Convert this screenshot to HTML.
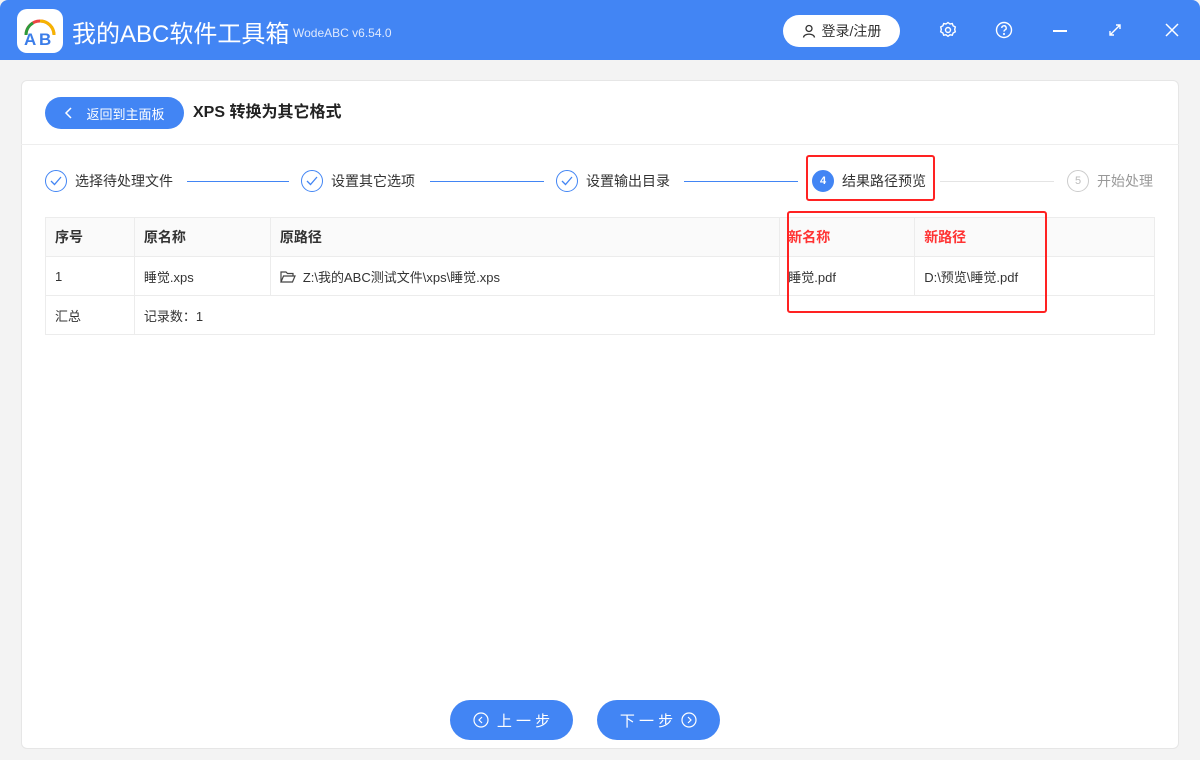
<!DOCTYPE html>
<html><head><meta charset="utf-8"><style>
*{margin:0;padding:0;box-sizing:border-box}
body{width:1200px;height:760px;background:#f3f3f3;font-family:"Liberation Sans","Noto Sans CJK SC",sans-serif;position:relative;overflow:hidden;color:#333}
.top{position:absolute;left:0;top:0;width:1200px;height:60px;background:#4285f4;border-radius:8px 8px 0 0}
.abs{position:absolute}
.card{position:absolute;left:21px;top:80px;width:1158px;height:669px;background:#fff;border:1px solid #e6e6e6;border-radius:6px}
.btn{position:absolute;background:#4285f4;color:#fff;border-radius:20px;font-size:15px;display:flex;align-items:center;justify-content:center}
.step{position:absolute;top:170px;font-size:14px;color:#333;display:flex;align-items:center;height:22px}
.circ{width:22px;height:22px;border:1px solid #4285f4;border-radius:50%;margin-right:8px;display:flex;align-items:center;justify-content:center}
.line{position:absolute;top:181px;height:1px;background:#4285f4}
table{position:absolute;left:45px;top:217px;width:1110px;border-collapse:collapse;font-size:13px}
td{border:1px solid #ececec;padding:0 9px;height:39px}
th{border:1px solid #ececec;padding:0 9px;height:39px;text-align:left;background:#fafafa;font-weight:bold;font-size:14px}
.red{color:#f33}
.rbox{position:absolute;border:2px solid #f22;border-radius:3px}
</style></head><body>
<div class="top"></div>
<div class="abs" style="left:17px;top:9px;width:46px;height:44px;background:#fff;border-radius:10px">
<svg width="46" height="44" viewBox="0 0 46 44"><path d="M9 26 A14 14 0 0 1 37 26" fill="none" stroke="#e44" stroke-width="3"/><path d="M23 12 A14 14 0 0 1 37 26" fill="none" stroke="#f5b400" stroke-width="3"/><path d="M9 26 A14 14 0 0 1 16 14" fill="none" stroke="#2a9d3c" stroke-width="3"/><text x="7" y="36" font-size="17" font-weight="bold" fill="#3b7de9" font-family="Liberation Sans">A</text><text x="22" y="36" font-size="17" font-weight="bold" fill="#3b7de9" font-family="Liberation Sans">B</text></svg></div>
<div class="abs" style="left:72px;top:14px;color:#fff;font-size:24px">我的ABC软件工具箱</div>
<div class="abs" style="left:293px;top:26px;color:#dfe9fd;font-size:12px">WodeABC v6.54.0</div>
<div class="abs" style="left:783px;top:15px;width:117px;height:32px;background:#fff;border-radius:16px;font-size:14px;color:#333;display:flex;align-items:center;justify-content:center;gap:6px">
<svg width="14" height="14" viewBox="0 0 14 14" fill="none" stroke="#333" stroke-width="1.3"><circle cx="7" cy="4.5" r="3"/><path d="M1.5 13.5 C2 9 12 9 12.5 13.5"/></svg>登录/注册</div>
<svg class="abs" style="left:939px;top:21px" width="18" height="18" viewBox="0 0 18 18" fill="none" stroke="#fff" stroke-width="1.4"><circle cx="9" cy="9" r="2.5"/><path d="M9 1.5l2 1.5 2.3-.4.8 2.2 2.2 1.2-.6 2.4.6 2.4-2.2 1.2-.8 2.2-2.3-.4-2 1.5-2-1.5-2.3.4-.8-2.2-2.2-1.2.6-2.4-.6-2.4 2.2-1.2.8-2.2 2.3.4z"/></svg>
<svg class="abs" style="left:995px;top:21px" width="18" height="18" viewBox="0 0 18 18" fill="none" stroke="#fff" stroke-width="1.4"><circle cx="9" cy="9" r="7.5"/><path d="M6.8 7a2.2 2.2 0 1 1 3 2c-.7.3-.8.8-.8 1.6"/><circle cx="9" cy="13" r=".4"/></svg>
<div class="abs" style="left:1053px;top:30px;width:14px;height:1.5px;background:#fff"></div>
<svg class="abs" style="left:1108px;top:23px" width="14" height="14" viewBox="0 0 14 14" fill="none" stroke="#fff" stroke-width="1.4"><path d="M2 12L12 2M8 2h4v4M2 8v4h4"/></svg>
<svg class="abs" style="left:1165px;top:23px" width="14" height="14" viewBox="0 0 14 14" stroke="#fff" stroke-width="1.5"><path d="M1 1l12 12M13 1L1 13"/></svg>
<div class="card"></div>
<div class="btn" style="left:45px;top:97px;width:139px;height:32px;border-radius:16px;font-size:13px">
<svg width="10" height="12" viewBox="0 0 10 12" style="margin-right:12px" fill="none" stroke="#fff" stroke-width="1.5"><path d="M7 1L2 6l5 5"/></svg>返回到主面板</div>
<div class="abs" style="left:193px;top:103px;font-size:16px;font-weight:bold;color:#222;line-height:20px">XPS 转换为其它格式</div>
<div class="abs" style="left:21px;top:144px;width:1158px;height:1px;background:#eee"></div>
<div class="step" style="left:45px"><div class="circ"><svg width="12" height="10" viewBox="0 0 12 10" fill="none" stroke="#4285f4" stroke-width="1.3"><path d="M1 5l3.5 3.5L11 1"/></svg></div>选择待处理文件</div>
<div class="line" style="left:187px;width:102px"></div>
<div class="step" style="left:301px"><div class="circ"><svg width="12" height="10" viewBox="0 0 12 10" fill="none" stroke="#4285f4" stroke-width="1.3"><path d="M1 5l3.5 3.5L11 1"/></svg></div>设置其它选项</div>
<div class="line" style="left:430px;width:114px"></div>
<div class="step" style="left:556px"><div class="circ"><svg width="12" height="10" viewBox="0 0 12 10" fill="none" stroke="#4285f4" stroke-width="1.3"><path d="M1 5l3.5 3.5L11 1"/></svg></div>设置输出目录</div>
<div class="line" style="left:684px;width:114px"></div>
<div class="step" style="left:812px"><div class="circ" style="background:#4285f4;color:#fff;font-size:11px;font-weight:bold">4</div>结果路径预览</div>
<div class="line" style="left:940px;width:114px;background:#e4e4e4"></div>
<div class="step" style="left:1067px;color:#999"><div class="circ" style="border-color:#ccc;color:#bbb;font-size:11px">5</div>开始处理</div>
<table>
<tr><th style="width:89px">序号</th><th style="width:136px">原名称</th><th style="width:510px">原路径</th><th class="red" style="width:135px;padding-left:8px">新名称</th><th class="red" style="width:240px">新路径</th></tr>
<tr><td>1</td><td>睡觉.xps</td><td><svg width="16" height="12" viewBox="0 0 16 12" fill="none" stroke="#444" stroke-width="1.2" style="vertical-align:-1px;margin-right:7px"><path d="M1 11V1h5l1.5 1.5H13V5M1 11l2.5-6H15l-2.5 6z"/></svg>Z:\我的ABC测试文件\xps\睡觉.xps</td><td style="padding-left:8px">睡觉.pdf</td><td>D:\预览\睡觉.pdf</td></tr>
<tr><td>汇总</td><td colspan="4">记录数：1</td></tr>
</table>
<div class="rbox" style="left:806px;top:155px;width:129px;height:46px"></div>
<div class="rbox" style="left:787px;top:211px;width:260px;height:102px"></div>
<div class="btn" style="left:450px;top:700px;width:123px;height:40px"><svg width="16" height="16" viewBox="0 0 16 16" fill="none" stroke="#fff" stroke-width="1.2" style="margin-right:8px"><circle cx="8" cy="8" r="7"/><path d="M9 5L6 8l3 3"/></svg>上 一 步</div>
<div class="btn" style="left:597px;top:700px;width:123px;height:40px">下 一 步<svg width="16" height="16" viewBox="0 0 16 16" fill="none" stroke="#fff" stroke-width="1.2" style="margin-left:8px"><circle cx="8" cy="8" r="7"/><path d="M7 5l3 3-3 3"/></svg></div>
</body></html>
